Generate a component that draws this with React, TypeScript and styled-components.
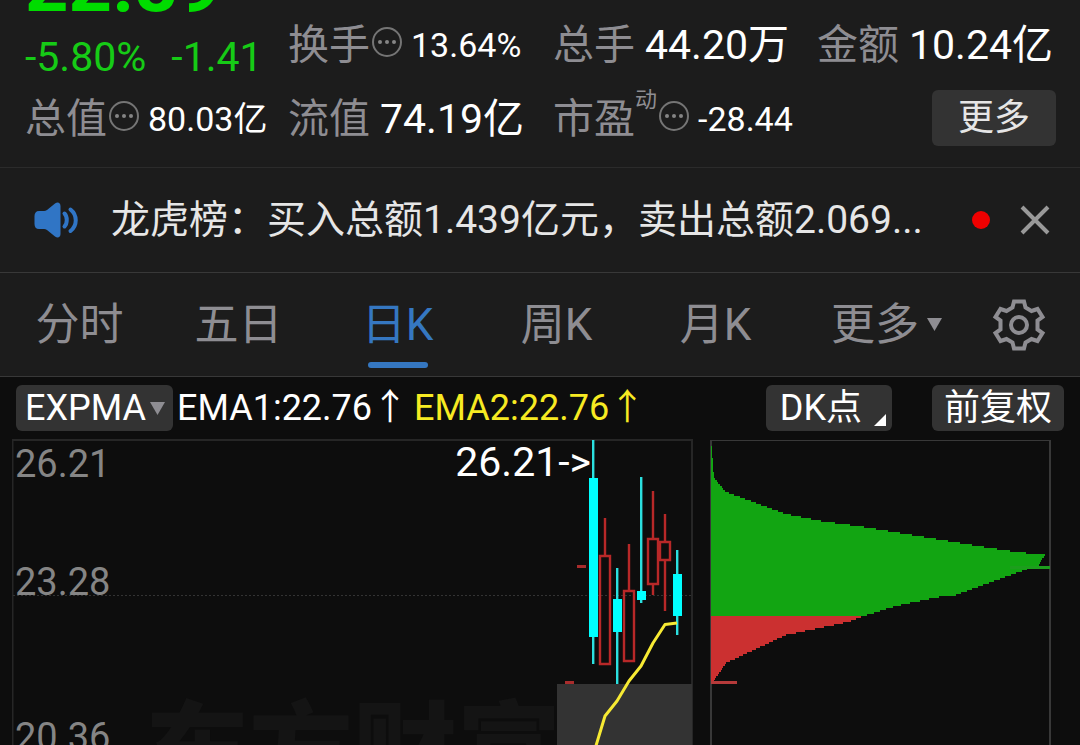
import React from "react";
import styled, { createGlobalStyle } from "styled-components";

const GlobalStyle = createGlobalStyle`
  * { box-sizing: border-box; }
  body {
    margin: 0;
    background: #0d0d0d;
    color: #fff;
    font-family: Roboto, "Noto Sans CJK SC", sans-serif;
    overflow: hidden;
  }
  button {
    font-family: inherit;
    color: inherit;
    border: 0;
    padding: 0;
    margin: 0;
    background: none;
    cursor: pointer;
    white-space: nowrap;
  }
`;

const Page = styled.main`
  width: 100%;
`;

/* ---------- quote summary ---------- */

const Quote = styled.section`
  display: grid;
  grid-template-columns: 263fr 265fr 264fr 239fr;
  grid-template-rows: 81px 74px;
  padding: 0 24px 12px 25px;
  background: #1c1c1c;
  border-bottom: 1px solid #2b2b2b;
`;

const PriceCell = styled.div`
  display: flex;
  flex-direction: column;
  color: #00dc00;
`;

const Price = styled.div`
  height: 25px;
  display: flex;
  align-items: flex-end;
  font-size: 76px;
  line-height: 80px;
  font-weight: 700;
`;

const Change = styled.div`
  flex: 1;
  display: flex;
  align-items: center;
  gap: 25px;
  padding-top: 8px;
  font-size: 41px;
  line-height: 48px;
  color: #16cb16;
  white-space: nowrap;
`;

const Metric = styled.div<{ $top?: boolean }>`
  display: flex;
  align-items: center;
  padding-top: ${(p) => (p.$top ? "8px" : "1px")};
  white-space: nowrap;
`;

const MetricLabel = styled.span`
  font-size: 41px;
  line-height: 56px;
  color: #8e8d92;
`;

const Superscript = styled.sup`
  align-self: flex-start;
  font-size: 22px;
  line-height: 36px;
  color: #8e8d92;
`;

const MetricValue = styled.span<{ $compact?: boolean }>`
  margin-left: ${(p) => (p.$compact ? "8px" : "10px")};
  font-size: ${(p) => (p.$compact ? "34px" : "41px")};
  line-height: 56px;
`;

const InfoButton = styled.button`
  display: flex;
  margin: 0 0 6px 1px;
`;

const MoreCell = styled.div`
  display: flex;
  align-items: center;
  justify-content: flex-end;
`;

const MoreButton = styled.button`
  padding: 0 26px;
  font-size: 36px;
  line-height: 56px;
  color: #e6e6e6;
  background: #333;
  border-radius: 6px;
`;

/* ---------- news strip ---------- */

const Notice = styled.section`
  display: flex;
  align-items: center;
  height: 105px;
  padding: 0 30px 0 33px;
  background: #1c1c1c;
  border-bottom: 1px solid #383838;
`;

const Headline = styled.a`
  flex: 1;
  margin-left: 32px;
  font-size: 39px;
  line-height: 56px;
  color: #e6e6e6;
  text-decoration: none;
  white-space: nowrap;
`;

const Dot = styled.span`
  width: 18px;
  height: 18px;
  margin-right: 30px;
  border-radius: 50%;
  background: #f00000;
`;

const IconButton = styled.button`
  display: flex;
  align-items: center;
  justify-content: center;
`;

/* ---------- period tabs ---------- */

const Tabs = styled.nav`
  display: grid;
  grid-template-columns: repeat(5, 159fr) 183fr 82fr;
  height: 104px;
  padding-right: 20px;
  background: #1c1c1c;
  border-bottom: 1px solid #383838;
`;

const Tab = styled.button<{ $active?: boolean }>`
  position: relative;
  display: flex;
  align-items: center;
  justify-content: center;
  gap: 8px;
  font-size: 44px;
  line-height: 60px;
  color: ${(p) => (p.$active ? "#3577c1" : "#8e8d92")};

  &::after {
    content: "";
    display: ${(p) => (p.$active ? "block" : "none")};
    position: absolute;
    left: calc(50% - 30px);
    bottom: 8px;
    width: 60px;
    height: 6px;
    border-radius: 3px;
    background: #3577c1;
  }
`;

/* ---------- chart ---------- */

const Toolbar = styled.div`
  display: flex;
  align-items: center;
  height: 62px;
  padding: 0 16px;
  font-size: 36px;
  line-height: 46px;
  white-space: nowrap;
`;

const Chip = styled.button<{ $gap?: number }>`
  display: flex;
  align-items: center;
  margin-left: ${(p) => p.$gap ?? 0}px;
  padding: 0 12px;
  font-size: 36px;
  line-height: 46px;
  background: #333;
  border-radius: 6px;
`;

const IndicatorChip = styled(Chip)`
  gap: 4px;
  padding: 0 8px 0 9px;
  margin-right: 4px;
`;

const DropChip = styled(Chip)`
  gap: 12px;
  padding: 0 6px 0 14px;
`;

const Indicator = styled.span<{ $color: string }>`
  margin-right: 6px;
  color: ${(p) => p.$color};
`;

const Spacer = styled.span`
  flex: 1;
`;

const CornerMark = styled.svg`
  align-self: flex-end;
  margin-bottom: 5px;
`;

const Charts = styled.div`
  display: grid;
  grid-template-columns: 681fr 342fr;
  gap: 17px;
  padding: 0 28px 0 12px;
`;

const Chart = styled.svg`
  display: block;
  width: 100%;
  height: auto;
`;

const MoreDots = () => (
  <InfoButton aria-label="说明">
    <svg width="32" height="32" viewBox="0 0 32 32">
      <circle cx="16" cy="16" r="14" fill="none" stroke="#757575" strokeWidth="2" />
      <g fill="#858585">
        <circle cx="9" cy="16" r="2" />
        <circle cx="16" cy="16" r="2" />
        <circle cx="23" cy="16" r="2" />
      </g>
    </svg>
  </InfoButton>
);

const Caret = () => (
  <svg width="15" height="13" viewBox="0 0 15 13">
    <path d="M0 0H15L7.5 13Z" fill="#8e8d92" />
  </svg>
);

const Speaker = () => (
  <svg width="46" height="36" viewBox="0 0 46 36" aria-hidden="true">
    <path
      d="M6 9H11C12 9 13 8.600 14 8L22 1.500C25 -0.500 27.500 1 27.500 4V32C27.500 35 25 36.500 22 34.500L14 28C13 27.400 12 27 11 27H6C3 27 1.500 25 1.500 22V14C1.500 11 3 9 6 9Z"
      fill="#3075c5"
    />
    <path
      d="M31.500 11.500C34.500 14.500 34.500 21.500 31.500 24.500M37.500 7.500C44.500 13 44.500 23.500 37.500 29"
      fill="none"
      stroke="#3075c5"
      strokeWidth="4"
      strokeLinecap="round"
    />
  </svg>
);

const Cross = () => (
  <svg width="30" height="30" viewBox="0 0 30 30">
    <path d="M2 2L28 28M28 2L2 28" stroke="#999" strokeWidth="4" />
  </svg>
);

const Gear = () => (
  <svg width="54" height="54" viewBox="-27 -27 54 54" fill="none" stroke="#8e8d92" strokeWidth="4">
    <path d="M-5 -23.500H5L6.500 -17.500L12.500 -14L18.500 -16L23.500 -8L18.500 -4.500V4.500L23.500 8L18.500 16L12.500 14L6.500 17.500L5 23.500H-5L-6.500 17.500L-12.500 14L-18.500 16L-23.500 8L-18.500 4.500V-4.500L-23.500 -8L-18.500 -16L-12.500 -14L-6.500 -17.500Z" />
    <circle r="8" />
  </svg>
);

type Candle = { x: number; high: number; low: number; top: number; bottom: number; up?: boolean };

const candles: Candle[] = [
  { x: 581, high: 1, low: 225, top: 39, bottom: 198 },
  { x: 593, high: 79, low: 225, top: 117, bottom: 225, up: true },
  { x: 605, high: 129, low: 245, top: 160, bottom: 193 },
  { x: 617, high: 105, low: 222, top: 152, bottom: 222, up: true },
  { x: 629, high: 38, low: 164, top: 152, bottom: 161 },
  { x: 641, high: 52, low: 156, top: 100, bottom: 145, up: true },
  { x: 653, high: 75, low: 172, top: 103, bottom: 121, up: true },
  { x: 665, high: 111, low: 196, top: 135, bottom: 177 },
];

const CandleStick = ({ x, high, low, top, bottom, up }: Candle) =>
  up ? (
    <path
      d={`M${x} ${high}V${top}M${x} ${bottom}V${low}M${x - 5} ${top}H${x + 5}V${bottom}H${x - 5}Z`}
      fill="none"
      stroke="#b82828"
      strokeWidth="2.4"
    />
  ) : (
    <g fill="#00ffff">
      <rect x={x - 1} y={high} width="2.4" height={low - high} fill="#2be0e0" />
      <rect x={x - 4} y={top} width="9" height={bottom - top} />
    </g>
  );

/* Right edge of the cost distribution: [y, width] */
const profile: [number, number][] = [
  [0, 0], [39, 3], [53, 15], [75, 75], [82, 110], [88, 153], [97, 207], [108, 273],
  [113, 305], [116, 334], [127, 327], [130, 316], [156, 245], [158, 228], [167, 185],
  [178, 150], [183, 137], [196, 75], [224, 15], [243, 2],
];

const widthAt = (y: number) => {
  const i = profile.findIndex(([py]) => py >= y);
  if (i <= 0) return profile[0][1];
  const [y0, w0] = profile[i - 1];
  const [y1, w1] = profile[i];
  return w0 + ((w1 - w0) * (y - y0)) / (y1 - y0);
};

const stepped = (from: number, to: number) => {
  let d = `M1 ${from}`;
  for (let y = from; y < to; y += 2) d += `H${Math.round(1 + widthAt(y + 1))}V${y + 2}`;
  return `${d}H1Z`;
};

const PriceChart = () => (
  <Chart viewBox="0 0 681 306" role="img" aria-label="日K线">
    <text x="133" y="350" fontSize="104" fontWeight="900" fill="#141414">东方财富</text>
    <path d="M0.500 320V1H680V320" fill="none" stroke="#262626" strokeWidth="2" />
    <path d="M1 156.500H680" stroke="#333" strokeWidth="1" strokeDasharray="2 2" />
    <rect x="545" y="245" width="135" height="61" fill="#333" />
    <g fontSize="38" fill="#858585">
      <text x="3" y="38">26.21</text>
      <text x="3" y="156">23.28</text>
      <text x="3" y="311">20.36</text>
    </g>
    <text x="579" y="37" fontSize="41" fill="#fff" textAnchor="end">26.21-&gt;</text>
    <path d="M565 127.500H574M553 243.500H562" stroke="#a82c2c" strokeWidth="3" />
    {candles.map((c) => (
      <CandleStick key={c.x} {...c} />
    ))}
    <path
      d="M583 310L593 277L605 262L617 242L629 227L641 204L653 185.500L665 184"
      fill="none"
      stroke="#f7ea33"
      strokeWidth="3"
      strokeLinejoin="round"
    />
  </Chart>
);

const CostChart = () => (
  <Chart viewBox="0 0 342 306" role="img" aria-label="筹码分布">
    <path d="M1 320V1.500M340 1.500V320" fill="none" stroke="#383838" strokeWidth="2" />
    <path d="M0 1.500H341" stroke="#383838" strokeWidth="1" />
    <path d={stepped(1, 177)} fill="#12a512" />
    <rect x="300" y="127" width="40" height="3" fill="#1d9e1d" />
    <path d={stepped(177, 243)} fill="#cb3030" />
    <rect x="1" y="242" width="26" height="3" fill="#b53a3a" />
  </Chart>
);

const periods = ["分时", "五日", "日K", "周K", "月K"];

export default function App() {
  return (
    <Page>
      <GlobalStyle />
      <Quote>
        <PriceCell>
          <Price>22.89</Price>
          <Change>
            <span>-5.80%</span>
            <span>-1.41</span>
          </Change>
        </PriceCell>
        <Metric $top>
          <MetricLabel>换手</MetricLabel>
          <MoreDots />
          <MetricValue $compact>13.64%</MetricValue>
        </Metric>
        <Metric $top>
          <MetricLabel>总手</MetricLabel>
          <MetricValue>44.20万</MetricValue>
        </Metric>
        <Metric $top>
          <MetricLabel>金额</MetricLabel>
          <MetricValue>10.24亿</MetricValue>
        </Metric>
        <Metric>
          <MetricLabel>总值</MetricLabel>
          <MoreDots />
          <MetricValue $compact>80.03亿</MetricValue>
        </Metric>
        <Metric>
          <MetricLabel>流值</MetricLabel>
          <MetricValue>74.19亿</MetricValue>
        </Metric>
        <Metric>
          <MetricLabel>市盈</MetricLabel>
          <Superscript>动</Superscript>
          <MoreDots />
          <MetricValue $compact>-28.44</MetricValue>
        </Metric>
        <MoreCell>
          <MoreButton>更多</MoreButton>
        </MoreCell>
      </Quote>

      <Notice>
        <Speaker />
        <Headline href="#news">龙虎榜：买入总额1.439亿元，卖出总额2.069...</Headline>
        <Dot />
        <IconButton aria-label="关闭">
          <Cross />
        </IconButton>
      </Notice>

      <Tabs>
        {periods.map((p) => (
          <Tab key={p} $active={p === "日K"}>
            {p}
          </Tab>
        ))}
        <Tab>
          更多
          <Caret />
        </Tab>
        <IconButton aria-label="设置">
          <Gear />
        </IconButton>
      </Tabs>

      <Toolbar>
        <IndicatorChip>
          EXPMA
          <Caret />
        </IndicatorChip>
        <Indicator $color="#fff">EMA1:22.76↑</Indicator>
        <Indicator $color="#f7ea22">EMA2:22.76↑</Indicator>
        <Spacer />
        <DropChip>
          DK点
          <CornerMark width="12" height="12" viewBox="0 0 12 12">
            <path d="M12 0V12H0Z" fill="#fff" />
          </CornerMark>
        </DropChip>
        <Chip $gap={40}>前复权</Chip>
      </Toolbar>

      <Charts>
        <PriceChart />
        <CostChart />
      </Charts>
    </Page>
  );
}
